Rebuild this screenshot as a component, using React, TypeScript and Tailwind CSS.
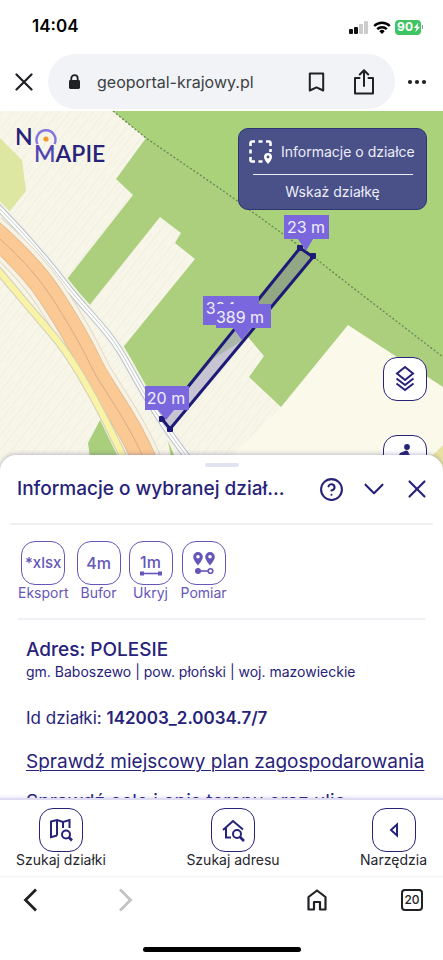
import React from 'react';
import { ChevronDown, CircleHelp, X } from 'lucide-react';

const NAVY = '#27227a';
const VIOLET = '#7a67dd';

function StatusBar() {
  return (
    <div className="flex items-center justify-between pl-8 pr-5 h-[54px] shrink-0 text-black">
      <span className="text-[17px] font-semibold">14:04</span>
      <div className="flex items-center gap-1">
        <svg width="20" height="13" viewBox="0 0 20 13">
          <rect x="0" y="8" width="4" height="5" rx="1" fill="#111" />
          <rect x="5" y="6" width="4" height="7" rx="1" fill="#111" />
          <rect x="10" y="3" width="4" height="10" rx="1" fill="#ccc" />
          <rect x="15" y="0" width="4" height="13" rx="1" fill="#ccc" />
        </svg>
        <svg width="18" height="13" viewBox="0 0 18 13" fill="none" stroke="#000" strokeWidth="2.4">
          <path d="M1.2 5a11 11 0 0 1 15.6 0" />
          <path d="M4.2 8.2a6.800 6.800 0 0 1 9.600 0" />
          <path d="M9 13l-2.700-2.800a3.800 3.800 0 0 1 5.400 0z" fill="#000" stroke="none" />
        </svg>
        <div className="flex items-center">
          <div className="flex items-center h-[15px] pl-0.5 rounded bg-[#3fc463] text-white text-xs font-bold">
            90
            <svg width="8" height="11" viewBox="0 0 9 11" fill="#fff">
              <path d="M6 0L1 6.2h3L2.500 11 8 4.600H5z" />
            </svg>
          </div>
          <span className="w-px h-1 ml-px bg-gray-400" />
        </div>
      </div>
    </div>
  );
}

function AddressBar() {
  return (
    <div className="flex items-center gap-3 pl-3 pr-4 pb-[2px] shrink-0 text-[#202124]">
      <button aria-label="Zamknij stronę" className="w-6 flex justify-center">
        <svg width="18" height="18" viewBox="0 0 18 18" stroke="currentColor" strokeWidth="2.2" strokeLinecap="round">
          <path d="M1.5 1.5l15 15M16.5 1.5l-15 15" />
        </svg>
      </button>
      <div className="flex-1 flex items-center h-[55px] pl-5 pr-5 rounded-full bg-[#f1f3f7]">
        <svg width="13" height="16" viewBox="0 0 13 16" className="shrink-0">
          <path d="M3.3 7V4.3a3.2 3.2 0 0 1 6.4 0V7" fill="none" stroke="#202124" strokeWidth="1.8" />
          <rect x="1" y="6" width="11" height="9" rx="1.4" fill="#202124" />
        </svg>
        <span className="flex-1 ml-4 text-base text-[#3c4043]">geoportal-krajowy.pl</span>
        <button aria-label="Zakładka">
          <svg width="17" height="20" viewBox="0 0 17 20" fill="none" stroke="currentColor" strokeWidth="2" strokeLinejoin="round">
            <path d="M1.8 1.5h13.4v17l-6.7-3.2-6.7 3.2z" />
          </svg>
        </button>
        <button aria-label="Udostępnij" className="ml-7">
          <svg width="22" height="26" viewBox="0 0 22 26" fill="none" stroke="currentColor" strokeWidth="2" strokeLinecap="round" strokeLinejoin="round">
            <path d="M6.5 9H2v15.5h18V9h-4.5M11 17V1.5M6.8 5.5L11 1.3l4.2 4.2" />
          </svg>
        </button>
      </div>
      <button aria-label="Więcej">
        <svg width="20" height="6" viewBox="0 0 20 6" fill="currentColor">
          <circle cx="3" cy="3" r="2.1" />
          <circle cx="10" cy="3" r="2.1" />
          <circle cx="17" cy="3" r="2.1" />
        </svg>
      </button>
    </div>
  );
}

function MapCanvas() {
  return (
    <svg className="absolute inset-0 w-full h-full" viewBox="0 0 443 362" preserveAspectRatio="xMidYMin slice">
      <defs>
        <pattern id="furrow" width="9" height="20" patternUnits="userSpaceOnUse" patternTransform="rotate(38)">
          <path d="M2 0v20" stroke="#efedde" strokeWidth="1" />
          <path d="M6 3v12" stroke="#f2f0e2" strokeWidth="1" />
        </pattern>
      </defs>
      <rect width="443" height="362" fill="#f7f6e8" />
      <rect width="443" height="362" fill="url(#furrow)" />
      <path d="M281 296L348 214l95 62v86H215z" fill="#faf9ea" />
      <path d="M0 27l22 22 4 31-17 21-9-10z" fill="#dde7a1" />
      <path
        d="M113 0H443V276L348 214 281 296 249 266 264 245 248 226 214 247 165 306 147 287 120 240 195 148 175 132 181 122 160 106 88 196 64 172 133 84 116 68 146 27z"
        fill="#accf7e"
      />
      <path d="M113 0H443V245L348 173 301 137 222 79 146 27z" fill="#aad27b" />
      <path d="M100 309l-12 23 4 30h34z" fill="#a9cf7c" />
      <path d="M168 330l14 32h-8z" fill="#accf7e" />
      <path d="M443 334l-12 12 12 16z" fill="#e8e2a2" />
      <path d="M113 0l33 27 76 52 79 57 47 37 95 73" fill="none" stroke="#6d8a56" strokeWidth="1.4" strokeDasharray="2 2" />

      <g fill="none">
        <path d="M-6 92C26 124 46 148 66 174S104 214 120 240 152 302 192 352" stroke="#f4f3ea" strokeWidth="11" />
        <path d="M-6 92C26 124 46 148 66 174S104 214 120 240 152 302 192 352" stroke="#b9bfc2" strokeWidth="7" />
        <path d="M-6 92C26 124 46 148 66 174S104 214 120 240 152 302 192 352" stroke="#fdfdfb" strokeWidth="5" />
        <path d="M-6 92C26 124 46 148 66 174S104 214 120 240 152 302 192 352" stroke="#c6cbd0" strokeWidth="1" />
        <path d="M-10 119C14 140 34 160 50 184S82 236 92 257 133 315 151 366" stroke="#e4d9c5" strokeWidth="34" />
        <path d="M-10 119C14 140 34 160 50 184S82 236 92 257 133 315 151 366" stroke="#f6f2e4" strokeWidth="32" />
        <path d="M-10 119C14 140 34 160 50 184S82 236 92 257 133 315 151 366" stroke="#e3bd93" strokeWidth="25" />
        <path d="M-10 119C14 140 34 160 50 184S82 236 92 257 133 315 151 366" stroke="#fbc994" strokeWidth="23" />
        <path d="M-10 119C14 140 34 160 50 184S82 236 92 257 133 315 151 366" stroke="#d3ac86" strokeWidth="1" />
        <path d="M-8 152C2 164 34 202 52 223S92 278 128 356" stroke="#cfccb4" strokeWidth="8" />
        <path d="M-8 152C2 164 34 202 52 223S92 278 128 356" stroke="#f8f3a6" strokeWidth="6" />
      </g>

      <path d="M300 137l13 9L170 318l-8-10z" fill="#6b6f8f" fillOpacity="0.4" />
      <path d="M238 212l14 9L170 318l-8-10 51-61z" fill="#d9d2f2" fillOpacity="0.35" />
      <path d="M300 137l13 9L170 318l-8-10z" fill="none" stroke="#1d1a78" strokeWidth="3" strokeLinejoin="round" />
      <g fill="#1d1a78">
        <rect x="297" y="134" width="6" height="6" rx="1" />
        <rect x="310" y="142" width="6" height="6" rx="1" />
        <rect x="159" y="305" width="6" height="6" rx="1" />
        <rect x="167" y="315" width="6" height="6" rx="1" />
      </g>

      {/* distance labels, the front one covers most of the one behind it */}
      <g fontSize="16" textAnchor="middle">
        <path d="M284 104h45v24h-16l-7 12-8-12h-14z" fill={VIOLET} />
        <text x="306" y="122" fill="#f1effc">23 m</text>
        <path d="M203 185h56v29h-56z" fill={VIOLET} />
        <text x="230" y="203" fill="#f1effc">394 m</text>
        <path d="M216 193h55v24h-20l-9 12-9-12h-17z" fill={VIOLET} />
        <text x="240" y="212" fill="#f1effc">389 m</text>
        <path d="M145 275h44v24h-15l-8 10-8-10h-13z" fill={VIOLET} />
        <text x="166" y="293" fill="#f1effc">20 m</text>
      </g>
    </svg>
  );
}

function Logo() {
  return (
    <svg width="110" height="44" viewBox="0 0 110 44" className="absolute left-3 top-3">
      <g fill={NAVY} fontFamily="Lato, sans-serif" fontSize="23" fontWeight="600">
        <text x="3" y="22">N</text>
        <text x="22" y="39"><tspan fill="#5146b4">M</tspan>APIE</text>
      </g>
      <path d="M25.500 21a9.500 9.500 0 1 1 17 0" fill="none" stroke="#8475e0" strokeWidth="2.400" />
      <circle cx="34" cy="16" r="2.600" fill="#f2992e" />
    </svg>
  );
}

function ParcelCard() {
  return (
    <div className="absolute right-4 top-[17px] flex flex-col items-center w-[189px] h-[82px] px-[10px] rounded-[10px] border border-[#2d3474] bg-[#4a5088] text-sm text-[#eceefa]">
      <div className="flex items-center gap-2 w-full h-[45px] whitespace-nowrap">
        <svg width="24" height="24" viewBox="0 0 24 24" fill="none" stroke="#fff" strokeWidth="2.6" className="shrink-0">
          <path d="M1.500 6V3a1.500 1.500 0 0 1 1.500-1.500h3M9.500 1.500h4M17 1.500h3A1.500 1.500 0 0 1 21.500 3v3M1.500 9.500v4M1.500 17v3A1.500 1.500 0 0 0 3 21.500h3M9.500 21.500h4M21.500 9v3" />
          <path d="M19 13a4 4 0 0 0-4 4c0 3 4 7 4 7s4-4 4-7a4 4 0 0 0-4-4zm0 5.400a1.400 1.400 0 1 1 0-2.800 1.400 1.400 0 0 1 0 2.800z" fill="#fff" stroke="none" />
        </svg>
        Informacje o działce
      </div>
      <div className="w-[160px] h-px bg-white/90" />
      <button className="flex-1">Wskaż działkę</button>
    </div>
  );
}

function MapControls() {
  return (
    <div className="absolute right-4 top-[246px] flex flex-col gap-[34px]">
      <button aria-label="Warstwy" className="flex items-center justify-center w-11 h-11 rounded-[14px] border border-[#27227a] bg-white">
        <svg width="20" height="28" viewBox="0 0 20 28" fill="none" stroke={NAVY} strokeWidth="2">
          <path d="M10 2l8 6.500-8 6.500-8-6.500z" />
          <path d="M1.500 13.500L10 20l8.500-6.500" />
          <path d="M1.500 18.500L10 25l8.500-6.500" />
        </svg>
      </button>
      <button aria-label="Widok ulicy" className="flex items-start justify-center w-11 h-11 pt-2 rounded-[14px] border border-[#27227a] bg-white">
        <svg width="22" height="26" viewBox="0 0 22 26" fill={NAVY}>
          <circle cx="13" cy="3" r="2.9" />
          <path d="M3 15l3-6 6-2.500c2 0 2.500 1.500 3 3.500l4 3-1 2-5-2-2 4 4 3v6h-2.500v-5L8 18l2-7-3 1-2 4z" />
        </svg>
      </button>
    </div>
  );
}

interface Tool { label: string; icon: React.ReactNode; }

const tools: Tool[] = [
  { label: 'Eksport', icon: <span className="text-[15px] font-medium">*xlsx</span> },
  { label: 'Bufor', icon: <span className="text-base font-medium">4m</span> },
  {
    label: 'Ukryj',
    icon: (
      <span className="flex flex-col items-center pt-1 text-base leading-[17px] font-medium">
        1m
        <svg width="24" height="5" viewBox="0 0 24 5" fill="currentColor">
          <path d="M1 1.700h22v1.600H1z" />
          <path d="M1 .5h4v4H1zM19 .5h4v4h-4z" />
        </svg>
      </span>
    ),
  },
  {
    label: 'Pomiar',
    icon: (
      <svg width="24" height="24" viewBox="0 0 24 24" fill="currentColor">
        <path fillRule="evenodd" d="M6 1a4.800 4.800 0 0 0-4.800 4.800C1.200 9.300 6 14.500 6 14.500s4.800-5.200 4.800-8.700A4.800 4.800 0 0 0 6 1zm0 6.500a1.800 1.800 0 1 1 0-3.600 1.800 1.800 0 0 1 0 3.600z" />
        <path fillRule="evenodd" d="M18 1a4.800 4.800 0 0 0-4.800 4.800c0 3.500 4.800 8.700 4.800 8.700s4.800-5.200 4.800-8.700A4.800 4.800 0 0 0 18 1zm0 6.500a1.800 1.800 0 1 1 0-3.600 1.800 1.800 0 0 1 0 3.600z" />
        <circle cx="6" cy="20" r="3" />
        <path d="M6 19.200h10v1.600H6z" />
        <circle cx="18.5" cy="20" r="2.3" fill="none" stroke="currentColor" strokeWidth="1.6" />
      </svg>
    ),
  },
];

function ParcelSheet() {
  return (
    <section className="relative flex-1 min-h-0 overflow-hidden -mt-[18px] px-[10px] rounded-t-2xl bg-white text-[#27227a] shadow-[0_-1px_4px_rgba(60,50,130,0.3)]">
      <div className="w-[34px] h-1 mx-auto mt-2 rounded-full bg-[#dfe3f2]" />
      <header className="flex items-center h-11 pl-[7px] pr-0.5 pb-3 border-b-2 border-[#f0f0f5] box-content">
        <h1 className="flex-1 truncate text-[19px] font-medium">Informacje o wybranej dział...</h1>
        <div className="flex items-center gap-[15px]">
          <button aria-label="Pomoc" className="w-7 flex justify-center"><CircleHelp size={25} strokeWidth={2} className="shrink-0" /></button>
          <button aria-label="Zwiń" className="w-7 flex justify-center"><ChevronDown size={34} strokeWidth={1.5} className="shrink-0" /></button>
          <button aria-label="Zamknij" className="w-7 flex justify-center"><X size={30} strokeWidth={1.7} className="shrink-0" /></button>
        </div>
      </header>

      <div className="flex gap-2 mx-2 pt-4 pb-[17px] border-b-2 border-[#f0f0f5] text-[#6556b8]">
        {tools.map((tool) => (
          <button key={tool.label} className="flex flex-col items-center min-w-11">
            <span className="flex items-center justify-center w-11 h-11 rounded-[14px] border border-[#6556b8]">{tool.icon}</span>
            <span className="text-sm leading-4">{tool.label}</span>
          </button>
        ))}
      </div>

      <div className="px-4 pt-4">
        <h2 className="text-[19px] leading-7 font-medium">Adres: POLESIE</h2>
        <p className="text-sm leading-4">gm. Baboszewo | pow. płoński | woj. mazowieckie</p>
        <p className="mt-6 text-[17px] leading-7">
          Id działki: <span className="font-semibold">142003_2.0034.7/7</span>
        </p>
        <a href="#plan" className="block mt-4 text-[19px] leading-7 underline underline-offset-2 decoration-1 whitespace-nowrap">Sprawdź miejscowy plan zagospodarowania</a>
        <a href="#opis" className="block mt-3 text-[19px] leading-7 underline underline-offset-2 decoration-1 whitespace-nowrap">Sprawdź cele i opis terenu oraz ulic</a>
      </div>
    </section>
  );
}

const navItems: Tool[] = [
  {
    label: 'Szukaj działki',
    icon: (
      <svg width="24" height="24" viewBox="0 0 24 24" fill="none" stroke={NAVY} strokeWidth="2">
        <path d="M8 17.500l-6 1.700V3.500L8 2l6 2 6.500-2v8M8 2v15.500M14 4v6" />
        <circle cx="17" cy="16.5" r="4" />
        <path d="M20 19.500l3 3" strokeWidth="2.6" />
      </svg>
    ),
  },
  {
    label: 'Szukaj adresu',
    icon: (
      <svg width="24" height="24" viewBox="0 0 24 24" fill="none" stroke={NAVY} strokeWidth="2">
        <path d="M2 12L12 3l10 8.500M5 10v9.500h5" />
        <circle cx="16" cy="16" r="4" />
        <path d="M19 19l4 4" strokeWidth="2.6" />
      </svg>
    ),
  },
  {
    label: 'Narzędzia',
    icon: (
      <svg width="12" height="16" viewBox="0 0 12 16" fill="none" stroke={NAVY} strokeWidth="2">
        <path d="M9 2.500v11L3 8z" />
      </svg>
    ),
  },
];

function BottomNav() {
  return (
    <nav className="relative flex justify-between px-4 pt-2 pb-2 shrink-0 bg-white border-t-2 border-[#dfdcf2] shadow-[0_-1px_3px_rgba(120,100,220,0.2)]">
      {navItems.map((item) => (
        <button key={item.label} className="flex flex-col items-center text-[#26262e]">
          <span className="flex items-center justify-center w-11 h-11 rounded-[14px] border border-[#27227a]">{item.icon}</span>
          <span className="text-sm leading-4">{item.label}</span>
        </button>
      ))}
    </nav>
  );
}

function BrowserBar() {
  return (
    <footer className="shrink-0 border-t border-[#f7f7f7] text-[#202124]">
      <div className="flex items-center justify-between pl-[23px] pr-5 h-[46px]">
        <div className="flex gap-20">
          <button aria-label="Wstecz">
            <svg width="15" height="24" viewBox="0 0 15 24" fill="none" stroke="currentColor" strokeWidth="2.8">
              <path d="M13 1.500L2.500 12 13 22.500" />
            </svg>
          </button>
          <button aria-label="Dalej" className="text-[#c3c3c5]">
            <svg width="15" height="24" viewBox="0 0 15 24" fill="none" stroke="currentColor" strokeWidth="2.8">
              <path d="M2 1.500L12.500 12 2 22.500" />
            </svg>
          </button>
        </div>
        <div className="flex items-center gap-[74px]">
          <button aria-label="Strona główna">
            <svg width="20" height="22" viewBox="0 0 20 22" fill="none" stroke="currentColor" strokeWidth="2.2" strokeLinejoin="round">
              <path d="M1.500 8L10 1.500 18.500 8v12.500h-5.500V13H7v7.500H1.500z" />
            </svg>
          </button>
          <button className="flex items-center justify-center w-[22px] h-[22px] rounded border-2 border-[#202124] text-xs font-medium">20</button>
        </div>
      </div>
      <div className="pt-6 pb-2">
        <div className="w-[158px] h-[5px] mx-auto rounded-full bg-black" />
      </div>
    </footer>
  );
}

export default function App() {
  return (
    <div className="flex flex-col h-screen overflow-hidden bg-white font-['Inter',sans-serif]">
      <StatusBar />
      <AddressBar />
      <main className="flex flex-col flex-1 min-h-0">
        <div className="relative h-[362px] shrink-0 overflow-hidden">
          <MapCanvas />
          <Logo />
          <ParcelCard />
          <MapControls />
        </div>
        <ParcelSheet />
      </main>
      <BottomNav />
      <BrowserBar />
    </div>
  );
}
